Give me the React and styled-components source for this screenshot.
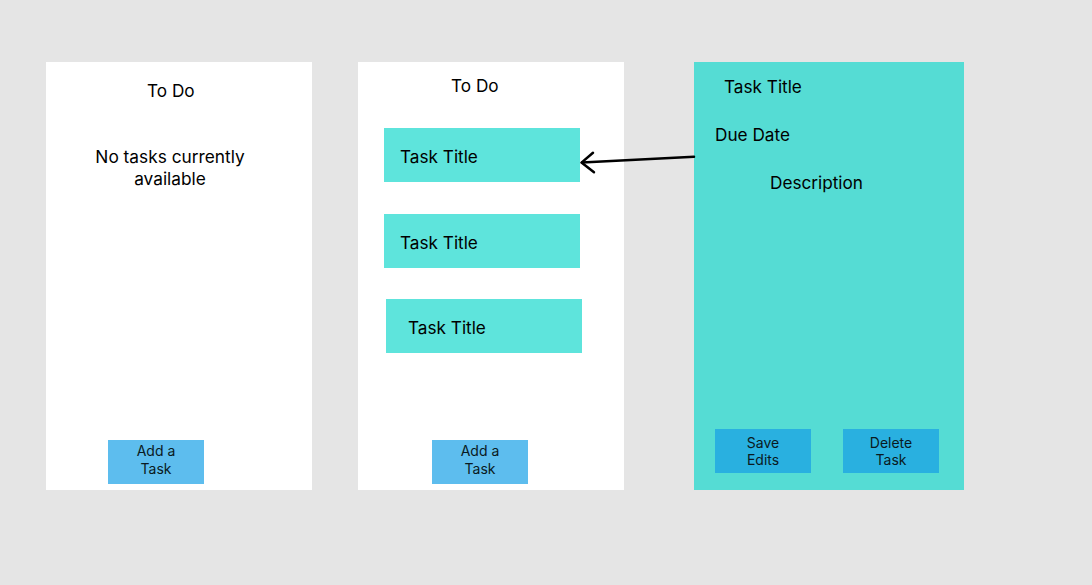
import React from "react";
import styled, { createGlobalStyle } from "styled-components";

const Global = createGlobalStyle`
  html, body { margin: 0; padding: 0; background: #e5e5e5; }
  body { font-family: Inter, "Noto Sans", sans-serif; color: #000; }
  * { box-sizing: border-box; }
`;

const Canvas = styled.div`
  position: relative;
  width: 1092px;
  height: 585px;
  display: flex;
  align-items: flex-start;
  padding: 62px 0 0 46px;
`;

const Panel = styled.section`
  width: ${(p) => p.$w}px;
  height: 428px;
  margin-right: ${(p) => p.$gap || 0}px;
  background: ${(p) => p.$bg || "#ffffff"};
  display: flex;
  flex-direction: column;
  align-items: flex-start;
`;

const Label = styled.div`
  font-size: 17.2px;
  line-height: 20px;
  white-space: nowrap;
  margin-top: ${(p) => p.$top}px;
  margin-left: ${(p) => p.$left}px;
`;

const Empty = styled.p`
  margin: ${(p) => p.$top}px 0 0 ${(p) => p.$left}px;
  width: 200px;
  text-align: center;
  font-size: 17.3px;
  line-height: 22px;
`;

const Card = styled.div`
  width: 196px;
  height: 54px;
  background: #5ee4dc;
  display: flex;
  align-items: center;
  padding-left: ${(p) => p.$pad}px;
  padding-top: 3px;
  font-size: 17.2px;
  margin-top: ${(p) => p.$top}px;
  margin-left: ${(p) => p.$left}px;
`;

const Button = styled.button`
  width: 96px;
  height: 44px;
  border: none;
  padding: 0 0 ${(p) => p.$lift || 0}px 0;
  background: ${(p) => p.$bg};
  color: #0a1a22;
  font-family: Inter, "Noto Sans", sans-serif;
  font-size: 14px;
  line-height: 17.5px;
  text-align: center;
  display: flex;
  align-items: center;
  justify-content: center;
`;

const Bottom = styled.div`
  margin-top: auto;
  margin-bottom: ${(p) => p.$bottom}px;
  margin-left: ${(p) => p.$left}px;
  display: flex;
  gap: ${(p) => p.$gap || 0}px;
`;

const Arrow = styled.svg`
  position: absolute;
  left: 0;
  top: 0;
  pointer-events: none;
`;

export default function App() {
  return (
    <>
      <Global />
      <Canvas>
        <Panel $w={266} $gap={46}>
          <Label $top={19} $left={101}>To Do</Label>
          <Empty $top={45} $left={24}>No tasks currently available</Empty>
          <Bottom $bottom={6} $left={62}>
            <Button $bg="#5dbdee" $lift={5}>Add a<br />Task</Button>
          </Bottom>
        </Panel>

        <Panel $w={266} $gap={70}>
          <Label $top={14} $left={93}>To Do</Label>
          <Card $top={32} $left={26} $pad={16}>Task Title</Card>
          <Card $top={32} $left={26} $pad={16}>Task Title</Card>
          <Card $top={31} $left={28} $pad={22}>Task Title</Card>
          <Bottom $bottom={6} $left={74}>
            <Button $bg="#5dbdee" $lift={5}>Add a<br />Task</Button>
          </Bottom>
        </Panel>

        <Panel $w={270} $bg="#55dcd4">
          <Label $top={15} $left={30}>Task Title</Label>
          <Label $top={28} $left={21}>Due Date</Label>
          <Label $top={28} $left={76}>Description</Label>
          <Bottom $bottom={17} $left={21} $gap={32}>
            <Button $bg="#29b0e0">Save<br />Edits</Button>
            <Button $bg="#29b0e0">Delete<br />Task</Button>
          </Bottom>
        </Panel>

        <Arrow width="1092" height="585" viewBox="0 0 1092 585">
          <g stroke="#000" strokeWidth="2.5" fill="none" strokeLinecap="round" strokeLinejoin="round">
            <line x1="694" y1="156.7" x2="582" y2="162.5" />
            <polyline points="593,152.7 581.5,162.6 594,172.3" />
          </g>
        </Arrow>
      </Canvas>
    </>
  );
}
